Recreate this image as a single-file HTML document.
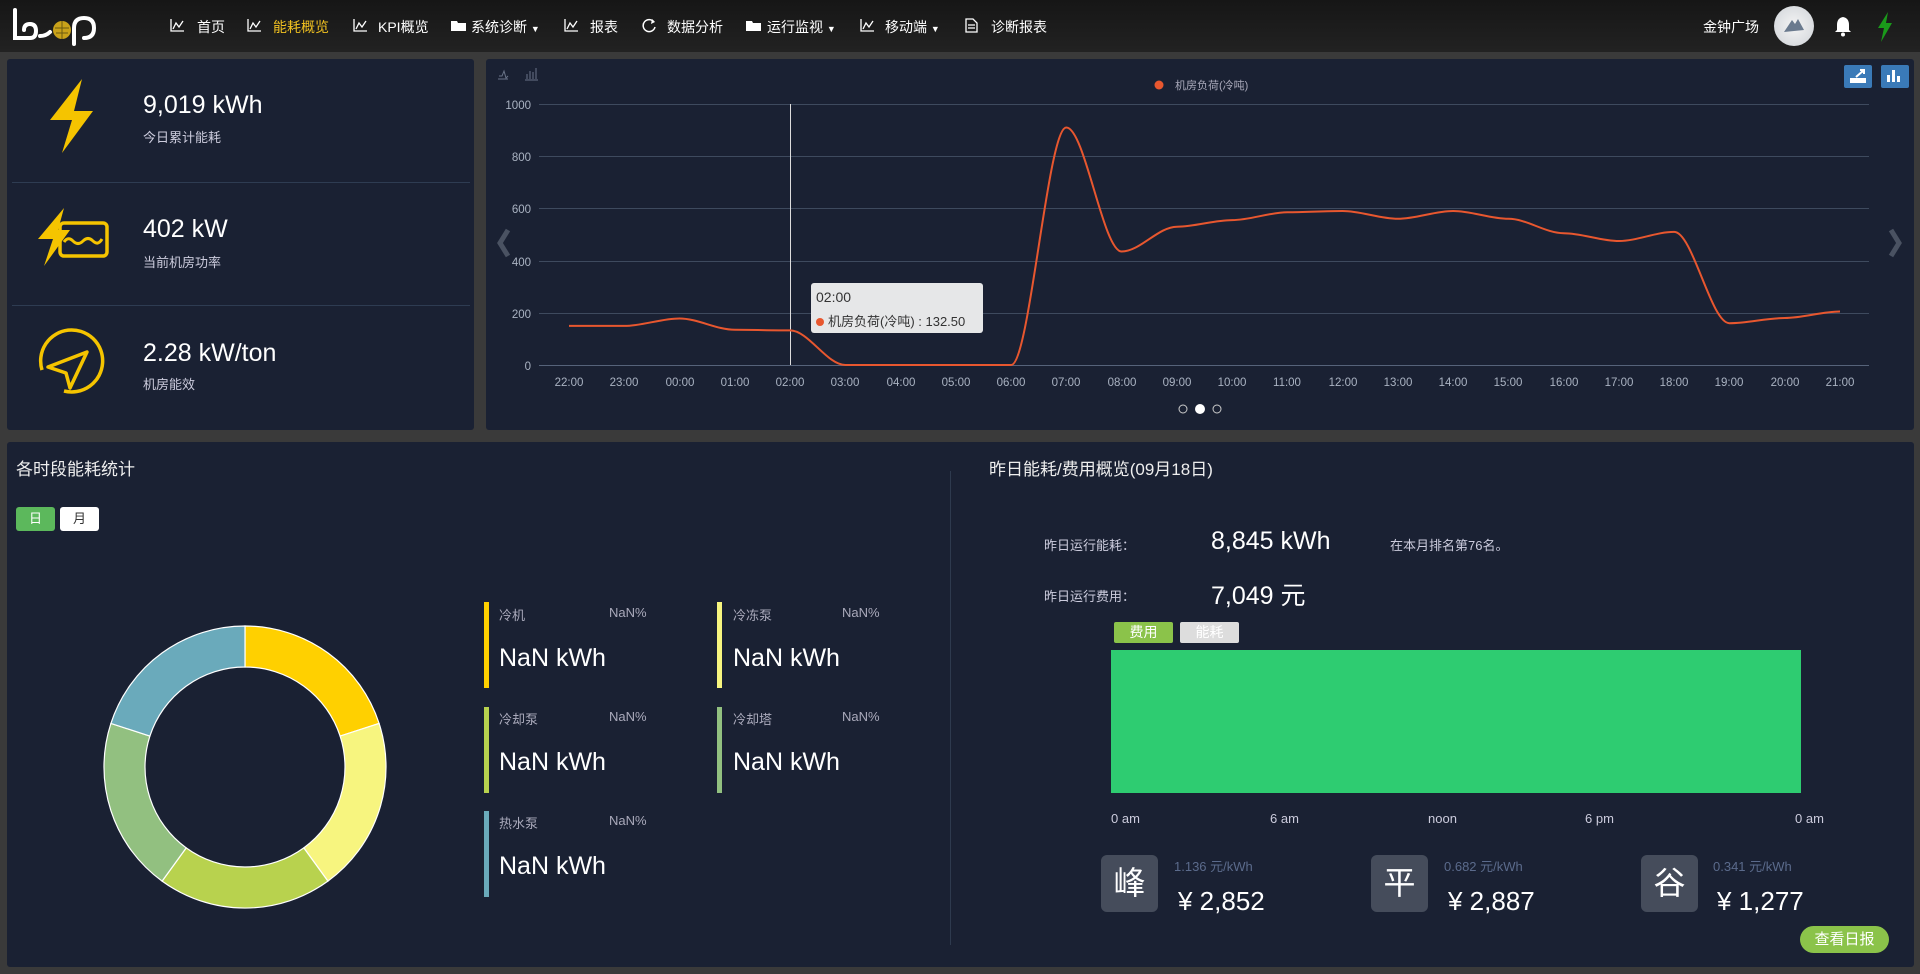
<!DOCTYPE html>
<html><head><meta charset="utf-8"><style>
*{margin:0;padding:0;box-sizing:border-box}
body{width:1920px;height:974px;background:#3a3a3a;font-family:"Liberation Sans","Noto Sans CJK SC",sans-serif;color:#fff;position:relative;overflow:hidden}
.abs{position:absolute}
.nav{left:0;top:0;width:1920px;height:52px;background:linear-gradient(#161616,#222)}
.nav .it{position:absolute;top:17px;font-size:14px;color:#fff;white-space:nowrap}
.panel{position:absolute;background:#1a2133;border-radius:3px}
.t{position:absolute;white-space:nowrap}
</style></head><body>
<div class="abs nav">
<svg class="abs" style="left:10px;top:6px" width="92" height="42" viewBox="0 0 92 42">
<g fill="none" stroke="#fff" stroke-width="4" stroke-linecap="round">
<path d="M5 4 V32 H20 Q26 32 26 25 Q26 18 20 18 Q14 18 14 24"/>
<path d="M30 30 Q36 30 40 26"/>
<path d="M64 38 V22 Q64 12 74 12 Q84 12 84 22 Q84 32 74 32"/>
</g>
<circle cx="52" cy="24" r="9" fill="#c9a21a"/>
<path d="M45 22 H59 M46 27 H58 M52 15 V33" stroke="#6a5a10" stroke-width="1"/>
</svg>
<svg class="abs" style="left:170px;top:19px" width="14" height="13"><path d="M1 0V12H14M3 10L6 4L9 8L13 2" fill="none" stroke="#fff" stroke-width="1.3"/></svg>
<div class="it" style="left:197px">首页</div>
<svg class="abs" style="left:247px;top:19px" width="14" height="13"><path d="M1 0V12H14M3 10L6 4L9 8L13 2" fill="none" stroke="#fff" stroke-width="1.3"/></svg>
<div class="it" style="left:273px;color:#f0c020">能耗概览</div>
<svg class="abs" style="left:353px;top:19px" width="14" height="13"><path d="M1 0V12H14M3 10L6 4L9 8L13 2" fill="none" stroke="#fff" stroke-width="1.3"/></svg>
<div class="it" style="left:378px">KPI概览</div>
<svg class="abs" style="left:451px;top:20px" width="17" height="12"><path d="M0 1H6L7 3H15V11H0Z" fill="#fff"/></svg>
<div class="it" style="left:471px">系统诊断 <span style="font-size:9px">▼</span></div>
<svg class="abs" style="left:564px;top:19px" width="14" height="13"><path d="M1 0V12H14M3 10L6 4L9 8L13 2" fill="none" stroke="#fff" stroke-width="1.3"/></svg>
<div class="it" style="left:590px">报表</div>
<svg class="abs" style="left:642px;top:18px" width="15" height="15"><path d="M12 4A6 6 0 1 0 13 9" fill="none" stroke="#fff" stroke-width="1.5"/><path d="M10 1L13 4L9 6Z" fill="#fff"/></svg>
<div class="it" style="left:667px">数据分析</div>
<svg class="abs" style="left:746px;top:20px" width="17" height="12"><path d="M0 1H6L7 3H15V11H0Z" fill="#fff"/></svg>
<div class="it" style="left:767px">运行监视 <span style="font-size:9px">▼</span></div>
<svg class="abs" style="left:860px;top:19px" width="14" height="13"><path d="M1 0V12H14M3 10L6 4L9 8L13 2" fill="none" stroke="#fff" stroke-width="1.3"/></svg>
<div class="it" style="left:885px">移动端 <span style="font-size:9px">▼</span></div>
<svg class="abs" style="left:965px;top:18px" width="13" height="15"><path d="M1 1H8L12 5V14H1Z M3 7H10M3 10H10" fill="none" stroke="#fff" stroke-width="1.3"/></svg>
<div class="it" style="left:991px">诊断报表</div>
<div class="it" style="left:1703px">金钟广场</div>
<div class="abs" style="left:1774px;top:6px;width:40px;height:40px;border-radius:50%;background:radial-gradient(#f4f4f4,#cfd3d8)"></div>
<svg class="abs" style="left:1782px;top:14px" width="24" height="22"><path d="M2 18L10 6L13 10L16 5L22 16Z" fill="#6a7a8e"/></svg>
<svg class="abs" style="left:1834px;top:16px" width="18" height="22"><path d="M9 1Q3 2 3 9V14L1 16H17L15 14V9Q15 2 9 1Z" fill="#fff"/><circle cx="9" cy="18.5" r="2" fill="#fff"/></svg>
<svg class="abs" style="left:1877px;top:12px" width="16" height="30"><path d="M11 0L1 16H7L4 30L15 11H9Z" fill="#1a9a1a"/></svg>
</div>

<div class="panel" style="left:7px;top:59px;width:467px;height:371px">
<div class="abs" style="left:5px;top:123px;width:458px;height:1px;background:#2e3c52"></div>
<div class="abs" style="left:5px;top:246px;width:458px;height:1px;background:#2e3c52"></div>
</div>
<svg class="abs" style="left:48px;top:79px" width="48" height="76"><path d="M34 0L2 41H24L14 74L45 32H26Z" fill="#f5c400"/></svg>
<svg class="abs" style="left:36px;top:208px" width="80" height="62"><path d="M28 0L2 31H17L8 58L34 22H22Z" fill="#f5c400"/><rect x="24" y="15" width="47" height="33" rx="4" fill="none" stroke="#f5c400" stroke-width="3.5"/><path d="M28 34Q32 28 37 33T47 33T57 33T66 31" fill="none" stroke="#f5c400" stroke-width="3"/></svg>
<svg class="abs" style="left:36px;top:326px" width="74" height="74"><path d="M6 44A31 31 0 1 1 28 65" fill="none" stroke="#f5c400" stroke-width="3.5"/><path d="M12 41L51 26L34 62L30 47Z" fill="none" stroke="#f5c400" stroke-width="3.5" stroke-linejoin="round"/></svg>
<div class="t" style="left:143px;top:91px;font-size:25px">9,019 kWh</div>
<div class="t" style="left:143px;top:127px;font-size:13px;color:#ccd">今日累计能耗</div>
<div class="t" style="left:143px;top:215px;font-size:25px">402 kW</div>
<div class="t" style="left:143px;top:252px;font-size:13px;color:#ccd">当前机房功率</div>
<div class="t" style="left:143px;top:339px;font-size:25px">2.28 kW/ton</div>
<div class="t" style="left:143px;top:374px;font-size:13px;color:#ccd">机房能效</div>

<div class="panel" style="left:486px;top:59px;width:1428px;height:371px"></div>
<svg class="abs" style="left:0;top:0" width="1920" height="440">
<g stroke="#3e4a5e" stroke-width="1">
<line x1="539" y1="104.5" x2="1869" y2="104.5"/><line x1="539" y1="156.5" x2="1869" y2="156.5"/><line x1="539" y1="208.5" x2="1869" y2="208.5"/><line x1="539" y1="261.5" x2="1869" y2="261.5"/><line x1="539" y1="313.5" x2="1869" y2="313.5"/><line x1="539" y1="365.5" x2="1869" y2="365.5" stroke="#56637a"/>
</g>
<line x1="790.5" y1="104" x2="790.5" y2="365" stroke="#ddd" stroke-width="1"/>
<path fill="none" stroke="#e8572f" stroke-width="2" d="M569,325.9 C587.4,325.9 605.9,325.9 624.3,325.9 C642.7,325.9 661.1,318.5 679.5,318.5 C697.9,318.5 716.4,329.8 734.8,329.8 C753.2,329.8 771.6,330.4 790,330.4 C808.4,330.4 826.9,365 845.3,365 L1011.1,365 C1029.5,365 1047.9,127.5 1066.3,127.5 C1084.7,127.5 1103.2,251.5 1121.6,251.5 C1140,251.5 1158.5,226.7 1176.9,226.7 C1195.3,226.7 1213.7,220.1 1232.1,220.1 C1250.5,220.1 1269,212.3 1287.4,212.3 C1305.8,212.3 1324.2,211 1342.6,211 C1361,211 1379.5,218.8 1397.9,218.8 C1416.3,218.8 1434.8,211 1453.2,211 C1471.6,211 1490,218.8 1508.4,218.8 C1526.8,218.8 1545.3,233.2 1563.7,233.2 C1582.1,233.2 1600.5,241 1618.9,241 C1637.3,241 1655.8,231.9 1674.2,231.9 C1692.6,231.9 1711,323.2 1729.4,323.2 C1747.8,323.2 1766.3,318 1784.7,318 C1803.1,318 1821.6,311.5 1840,311.5"/>
<g font-family="Liberation Sans,sans-serif" font-size="11.5" fill="#aab3c2" text-anchor="end">
<text x="531" y="109">1000</text><text x="531" y="161">800</text><text x="531" y="213">600</text><text x="531" y="266">400</text><text x="531" y="318">200</text><text x="531" y="370">0</text>
</g>
<g font-family="Liberation Sans,sans-serif" font-size="11.5" fill="#aab3c2" text-anchor="middle">
<text x="569" y="386">22:00</text><text x="624" y="386">23:00</text><text x="680" y="386">00:00</text><text x="735" y="386">01:00</text><text x="790" y="386">02:00</text><text x="845" y="386">03:00</text><text x="901" y="386">04:00</text><text x="956" y="386">05:00</text><text x="1011" y="386">06:00</text><text x="1066" y="386">07:00</text><text x="1122" y="386">08:00</text><text x="1177" y="386">09:00</text><text x="1232" y="386">10:00</text><text x="1287" y="386">11:00</text><text x="1343" y="386">12:00</text><text x="1398" y="386">13:00</text><text x="1453" y="386">14:00</text><text x="1508" y="386">15:00</text><text x="1564" y="386">16:00</text><text x="1619" y="386">17:00</text><text x="1674" y="386">18:00</text><text x="1729" y="386">19:00</text><text x="1785" y="386">20:00</text><text x="1840" y="386">21:00</text>
</g>
<circle cx="1159" cy="85" r="4.5" fill="#e8572f"/>
<text x="1175" y="89" font-family="Liberation Sans,Noto Sans CJK SC,sans-serif" font-size="11" fill="#aab">机房负荷(冷吨)</text>
<g stroke="#6a7488" fill="none" stroke-width="1"><path d="M498 79H508M499 76L502 76L504 71L506 78L508 76"/><path d="M525 80H538M527 79V74M530 79V71M533 79V72M536 79V68"/></g>
<rect x="1844" y="65" width="28" height="23" rx="2" fill="#3a7ab8"/>
<path d="M1851 82H1865V79H1851Z M1856 77L1864 70M1860 70H1864V74" stroke="#fff" fill="#fff" stroke-width="2"/>
<rect x="1881" y="65" width="28" height="23" rx="2" fill="#3a7ab8"/>
<path d="M1887 82V75H1890V82Z M1892 82V70H1895V82Z M1897 82V76H1900V82Z" fill="#fff"/>
<path d="M508 230L500 243L508 256" stroke="#4a5262" stroke-width="5" fill="none"/>
<path d="M1891 230L1899 243L1891 256" stroke="#4a5262" stroke-width="5" fill="none"/>
<circle cx="1183" cy="409" r="4" fill="none" stroke="#ccc" stroke-width="1"/>
<circle cx="1200" cy="409" r="5" fill="#fff"/>
<circle cx="1217" cy="409" r="4" fill="none" stroke="#ccc" stroke-width="1"/>
</svg>
<div class="abs" style="left:811px;top:283px;width:172px;height:50px;background:#e6e7e8;border-radius:3px;color:#333;font-size:13px">
<div class="t" style="left:5px;top:6px;font-size:14px">02:00</div>
<div class="t" style="left:5px;top:28px"><span style="display:inline-block;width:8px;height:8px;border-radius:50%;background:#e8572f;margin-right:4px"></span>机房负荷(冷吨) : 132.50</div>
</div>

<div class="panel" style="left:7px;top:442px;width:1907px;height:525px"></div>
<div class="t" style="left:16px;top:455px;font-size:17px;color:#eee">各时段能耗统计</div>
<div class="abs" style="left:16px;top:507px;width:39px;height:24px;background:#5cb85c;border-radius:3px;font-size:13px;text-align:center;line-height:24px">日</div>
<div class="abs" style="left:60px;top:507px;width:39px;height:24px;background:#fff;border-radius:3px;font-size:13px;text-align:center;line-height:24px;color:#333">月</div>
<svg class="abs" style="left:0;top:0" width="960" height="974">
<g stroke="#fff" stroke-width="1.2">
<path fill="#ffd000" d="M245,626 A141,141 0 0 1 379.1,723.4 L340.1,736.1 A100,100 0 0 0 245,667 Z"/>
<path fill="#f7f57f" d="M379.1,723.4 A141,141 0 0 1 327.9,881.1 L303.8,847.9 A100,100 0 0 0 340.1,736.1 Z"/>
<path fill="#b8d24e" d="M327.9,881.1 A141,141 0 0 1 162.1,881.1 L186.2,847.9 A100,100 0 0 0 303.8,847.9 Z"/>
<path fill="#92c080" d="M162.1,881.1 A141,141 0 0 1 110.9,723.4 L149.9,736.1 A100,100 0 0 0 186.2,847.9 Z"/>
<path fill="#6aaabb" d="M110.9,723.4 A141,141 0 0 1 245,626 L245,667 A100,100 0 0 0 149.9,736.1 Z"/>
</g>
<rect x="484" y="602" width="5" height="86" fill="#ffd000"/>
<rect x="717" y="602" width="5" height="86" fill="#f7f57f"/>
<rect x="484" y="707" width="5" height="86" fill="#b8d24e"/>
<rect x="717" y="707" width="5" height="86" fill="#92c080"/>
<rect x="484" y="811" width="5" height="86" fill="#6aaabb"/>
<line x1="950.5" y1="471" x2="950.5" y2="945" stroke="#2e3a4e"/>
</svg>
<div style="font-size:13px;color:#aab">
<div class="t" style="left:499px;top:605px">冷机</div><div class="t" style="left:609px;top:605px">NaN%</div>
<div class="t" style="left:733px;top:605px">冷冻泵</div><div class="t" style="left:842px;top:605px">NaN%</div>
<div class="t" style="left:499px;top:709px">冷却泵</div><div class="t" style="left:609px;top:709px">NaN%</div>
<div class="t" style="left:733px;top:709px">冷却塔</div><div class="t" style="left:842px;top:709px">NaN%</div>
<div class="t" style="left:499px;top:813px">热水泵</div><div class="t" style="left:609px;top:813px">NaN%</div>
</div>
<div style="font-size:25px;color:#fff">
<div class="t" style="left:499px;top:644px">NaN kWh</div><div class="t" style="left:733px;top:644px">NaN kWh</div>
<div class="t" style="left:499px;top:748px">NaN kWh</div><div class="t" style="left:733px;top:748px">NaN kWh</div>
<div class="t" style="left:499px;top:852px">NaN kWh</div>
</div>

<div class="t" style="left:989px;top:455px;font-size:17px;color:#eee">昨日能耗/费用概览(09月18日)</div>
<div class="t" style="left:1044px;top:535px;font-size:13px;color:#ccd">昨日运行能耗：</div>
<div class="t" style="left:1211px;top:527px;font-size:25px">8,845 kWh</div>
<div class="t" style="left:1390px;top:535px;font-size:13px;color:#ccd">在本月排名第76名。</div>
<div class="t" style="left:1044px;top:586px;font-size:13px;color:#ccd">昨日运行费用：</div>
<div class="t" style="left:1211px;top:576px;font-size:25px">7,049 元</div>
<div class="abs" style="left:1114px;top:622px;width:59px;height:21px;background:#8bc34a;border-radius:2px;font-size:14px;text-align:center;line-height:21px">费用</div>
<div class="abs" style="left:1180px;top:622px;width:59px;height:21px;background:#ddd;border-radius:2px;font-size:14px;text-align:center;line-height:21px;color:#fff">能耗</div>
<div class="abs" style="left:1111px;top:650px;width:690px;height:143px;background:#2ecc71"></div>
<div style="font-size:13px;color:#ccd">
<div class="t" style="left:1111px;top:811px">0 am</div><div class="t" style="left:1270px;top:811px">6 am</div><div class="t" style="left:1428px;top:811px">noon</div><div class="t" style="left:1585px;top:811px">6 pm</div><div class="t" style="left:1795px;top:811px">0 am</div>
</div>
<div class="abs" style="left:1101px;top:855px;width:57px;height:57px;background:#454c5b;border-radius:6px;font-size:32px;text-align:center;line-height:57px">峰</div>
<div class="t" style="left:1174px;top:856px;font-size:13px;color:#5b6b8c">1.136 元/kWh</div>
<div class="t" style="left:1178px;top:886px;font-size:26px">¥ 2,852</div>
<div class="abs" style="left:1371px;top:855px;width:57px;height:57px;background:#454c5b;border-radius:6px;font-size:32px;text-align:center;line-height:57px">平</div>
<div class="t" style="left:1444px;top:856px;font-size:13px;color:#5b6b8c">0.682 元/kWh</div>
<div class="t" style="left:1448px;top:886px;font-size:26px">¥ 2,887</div>
<div class="abs" style="left:1641px;top:855px;width:57px;height:57px;background:#454c5b;border-radius:6px;font-size:32px;text-align:center;line-height:57px">谷</div>
<div class="t" style="left:1713px;top:856px;font-size:13px;color:#5b6b8c">0.341 元/kWh</div>
<div class="t" style="left:1717px;top:886px;font-size:26px">¥ 1,277</div>
<div class="abs" style="left:1800px;top:926px;width:89px;height:27px;background:#8bc34a;border-radius:14px;font-size:15px;text-align:center;line-height:27px">查看日报</div>
</body></html>
